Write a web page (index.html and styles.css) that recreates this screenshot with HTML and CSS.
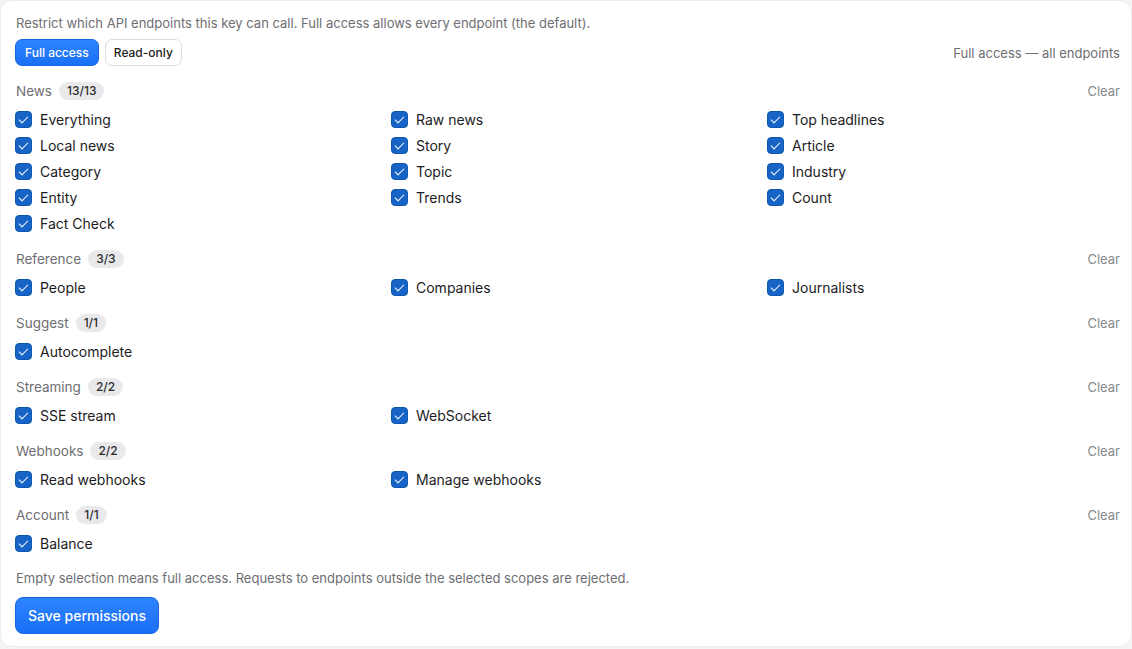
FILE: index.html
```html
<!DOCTYPE html>
<html lang="en">
<head>
<meta charset="utf-8">
<title>API key permissions</title>
<link rel="stylesheet" href="styles.css">
</head>
<body>
<div class="card">
  <p class="desc">Restrict which API endpoints this key can call. Full access allows every endpoint (the default).</p>
  <div class="toolbar">
    <div class="presets">
      <button class="btn btn-primary">Full access</button>
      <button class="btn btn-ghost">Read-only</button>
    </div>
    <span class="muted">Full access — all endpoints</span>
  </div>

  <section class="group">
    <div class="group-head"><span class="group-title">News</span><span class="badge">13/13</span><span class="clear">Clear</span></div>
    <div class="grid">
      <label class="item"><span class="cb"></span>Everything</label>
      <label class="item"><span class="cb"></span>Raw news</label>
      <label class="item"><span class="cb"></span>Top headlines</label>
      <label class="item"><span class="cb"></span>Local news</label>
      <label class="item"><span class="cb"></span>Story</label>
      <label class="item"><span class="cb"></span>Article</label>
      <label class="item"><span class="cb"></span>Category</label>
      <label class="item"><span class="cb"></span>Topic</label>
      <label class="item"><span class="cb"></span>Industry</label>
      <label class="item"><span class="cb"></span>Entity</label>
      <label class="item"><span class="cb"></span>Trends</label>
      <label class="item"><span class="cb"></span>Count</label>
      <label class="item"><span class="cb"></span>Fact Check</label>
    </div>
  </section>

  <section class="group">
    <div class="group-head"><span class="group-title">Reference</span><span class="badge">3/3</span><span class="clear">Clear</span></div>
    <div class="grid">
      <label class="item"><span class="cb"></span>People</label>
      <label class="item"><span class="cb"></span>Companies</label>
      <label class="item"><span class="cb"></span>Journalists</label>
    </div>
  </section>

  <section class="group">
    <div class="group-head"><span class="group-title">Suggest</span><span class="badge">1/1</span><span class="clear">Clear</span></div>
    <div class="grid">
      <label class="item"><span class="cb"></span>Autocomplete</label>
    </div>
  </section>

  <section class="group">
    <div class="group-head"><span class="group-title">Streaming</span><span class="badge">2/2</span><span class="clear">Clear</span></div>
    <div class="grid">
      <label class="item"><span class="cb"></span>SSE stream</label>
      <label class="item"><span class="cb"></span>WebSocket</label>
    </div>
  </section>

  <section class="group">
    <div class="group-head"><span class="group-title">Webhooks</span><span class="badge">2/2</span><span class="clear">Clear</span></div>
    <div class="grid">
      <label class="item"><span class="cb"></span>Read webhooks</label>
      <label class="item"><span class="cb"></span>Manage webhooks</label>
    </div>
  </section>

  <section class="group">
    <div class="group-head"><span class="group-title">Account</span><span class="badge">1/1</span><span class="clear">Clear</span></div>
    <div class="grid">
      <label class="item"><span class="cb"></span>Balance</label>
    </div>
  </section>

  <p class="note">Empty selection means full access. Requests to endpoints outside the selected scopes are rejected.</p>
  <button class="btn-save">Save permissions</button>
</div>
</body>
</html>
```

FILE: styles.css
```css
* { box-sizing: border-box; }
html, body { margin: 0; padding: 0; background: #f4f4f5; }
body {
  font-family: Inter, "Noto Sans", "Liberation Sans", sans-serif;
  color: #1c1c1e;
  -webkit-font-smoothing: antialiased;
}
.card {
  width: 1132px;
  height: 647px;
  background: #fff;
  border: 1px solid #ececec;
  border-radius: 12px;
  padding: 13px 11px 0 15px;
}
.desc {
  margin: 0;
  font-size: 13px;
  line-height: 18px;
  color: #6e6e73;
}
.toolbar {
  margin-top: 7px;
  display: flex;
  align-items: center;
  justify-content: space-between;
}
.presets { display: flex; gap: 6px; margin-left: -1px; }
.btn {
  font-family: inherit;
  font-size: 12px;
  font-weight: 500;
  height: 27px;
  padding: 0 9px;
  border-radius: 7px;
  cursor: pointer;
}
.btn-primary {
  background: linear-gradient(#2d84ff, #1a70f5);
  border: 1px solid #1866e0;
  color: #fff;
}
.btn-ghost {
  background: #fff;
  border: 1px solid #dcdcdc;
  color: #1c1c1e;
  padding: 0 8px;
}
.muted { font-size: 13px; color: #6e6e73; }
.group { margin-top: 15px; }
.group + .group { margin-top: 16px; }
.group-head {
  display: flex;
  align-items: center;
  height: 20px;
  margin-bottom: 8px;
}
.group-title { font-size: 13.5px; color: #6e6e73; }
.badge {
  margin-left: 7px;
  height: 18px;
  line-height: 18px;
  padding: 0 8px;
  border-radius: 9px;
  background: #e9e9eb;
  color: #2c2c2e;
  font-size: 12px;
  font-weight: 500;
}
.clear { margin-left: auto; font-size: 13px; color: #8a8a8e; }
.grid {
  display: grid;
  grid-template-columns: repeat(3, 1fr);
  column-gap: 24px;
  row-gap: 6px;
  margin-left: -1px;
  margin-right: 1px;
}
.item {
  display: flex;
  align-items: center;
  gap: 8px;
  height: 20px;
  font-size: 14px;
  color: #1c1c1e;
}
.cb {
  width: 17px;
  height: 17px;
  border-radius: 4px;
  background: #1764c6;
  border: 1px solid #1258b0;
  position: relative;
  flex: none;
}
.cb::after {
  content: "";
  position: absolute;
  left: 5px;
  top: 2.5px;
  width: 4px;
  height: 8px;
  border: solid #fff;
  border-width: 0 1.3px 1.3px 0;
  transform: rotate(45deg);
}
.note {
  margin: 16px 0 0;
  font-size: 13px;
  line-height: 18px;
  color: #6e6e73;
}
.btn-save {
  margin-top: 10px;
  margin-left: -1px;
  font-family: inherit;
  font-size: 14px;
  font-weight: 500;
  height: 37px;
  padding: 0 12px;
  border-radius: 8px;
  background: linear-gradient(#2d84ff, #1a6ef5);
  border: 1px solid #1866e0;
  color: #fff;
  cursor: pointer;
}
```
